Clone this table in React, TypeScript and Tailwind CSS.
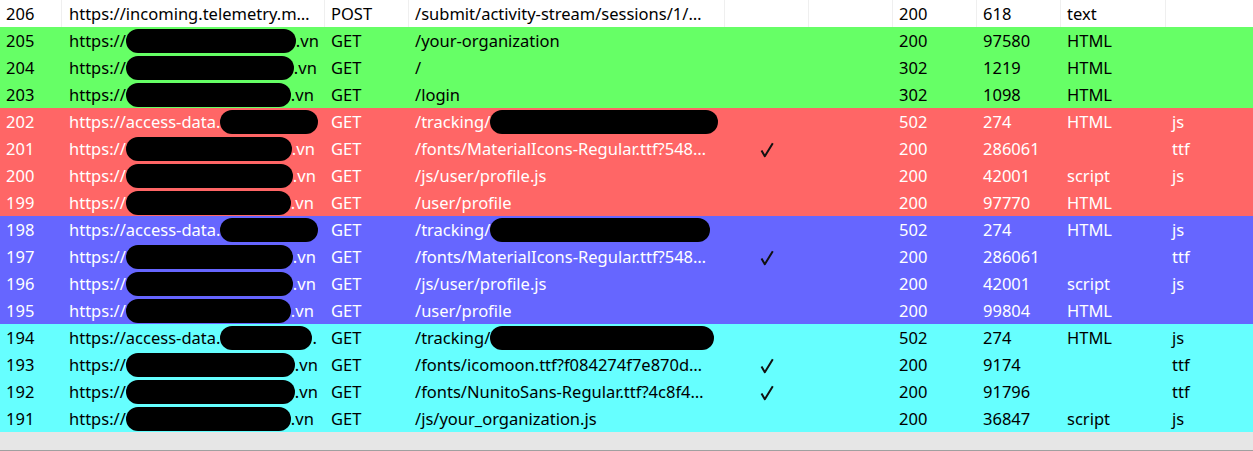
import React from "react"

type Row = {
  id: number
  tone: "white" | "green" | "red" | "blue" | "cyan"
  host: "telemetry" | "vn" | "access" | "access-dot"
  blob?: number
  method: string
  path: string
  trackBlob?: number
  cached?: boolean
  status: string
  size: string
  type: string
  ext: string
}

const rows: Row[] = [
  { id: 206, tone: "white", host: "telemetry", method: "POST", path: "/submit/activity-stream/sessions/1/…", status: "200", size: "618", type: "text", ext: "" },
  { id: 205, tone: "green", host: "vn", blob: 170, method: "GET", path: "/your-organization", status: "200", size: "97580", type: "HTML", ext: "" },
  { id: 204, tone: "green", host: "vn", blob: 168, method: "GET", path: "/", status: "302", size: "1219", type: "HTML", ext: "" },
  { id: 203, tone: "green", host: "vn", blob: 165, method: "GET", path: "/login", status: "302", size: "1098", type: "HTML", ext: "" },
  { id: 202, tone: "red", host: "access", blob: 98, method: "GET", path: "/tracking/", trackBlob: 228, status: "502", size: "274", type: "HTML", ext: "js" },
  { id: 201, tone: "red", host: "vn", blob: 166, method: "GET", path: "/fonts/MaterialIcons-Regular.ttf?548…", cached: true, status: "200", size: "286061", type: "", ext: "ttf" },
  { id: 200, tone: "red", host: "vn", blob: 167, method: "GET", path: "/js/user/profile.js", status: "200", size: "42001", type: "script", ext: "js" },
  { id: 199, tone: "red", host: "vn", blob: 165, method: "GET", path: "/user/profile", status: "200", size: "97770", type: "HTML", ext: "" },
  { id: 198, tone: "blue", host: "access", blob: 98, method: "GET", path: "/tracking/", trackBlob: 220, status: "502", size: "274", type: "HTML", ext: "js" },
  { id: 197, tone: "blue", host: "vn", blob: 167, method: "GET", path: "/fonts/MaterialIcons-Regular.ttf?548…", cached: true, status: "200", size: "286061", type: "", ext: "ttf" },
  { id: 196, tone: "blue", host: "vn", blob: 167, method: "GET", path: "/js/user/profile.js", status: "200", size: "42001", type: "script", ext: "js" },
  { id: 195, tone: "blue", host: "vn", blob: 165, method: "GET", path: "/user/profile", status: "200", size: "99804", type: "HTML", ext: "" },
  { id: 194, tone: "cyan", host: "access-dot", blob: 92, method: "GET", path: "/tracking/", trackBlob: 224, status: "502", size: "274", type: "HTML", ext: "js" },
  { id: 193, tone: "cyan", host: "vn", blob: 169, method: "GET", path: "/fonts/icomoon.ttf?f084274f7e870d…", cached: true, status: "200", size: "9174", type: "", ext: "ttf" },
  { id: 192, tone: "cyan", host: "vn", blob: 169, method: "GET", path: "/fonts/NunitoSans-Regular.ttf?4c8f4…", cached: true, status: "200", size: "91796", type: "", ext: "ttf" },
  { id: 191, tone: "cyan", host: "vn", blob: 165, method: "GET", path: "/js/your_organization.js", status: "200", size: "36847", type: "script", ext: "js" },
]

const toneClass: Record<Row["tone"], string> = {
  white: "bg-white text-black",
  green: "bg-[#66ff66] text-black",
  red: "bg-[#ff6666] text-white",
  blue: "bg-[#6666ff] text-white",
  cyan: "bg-[#66ffff] text-black",
}

// redaction scribble over the hostnames / tracking ids
const Blob = ({ w }: { w: number }) => (
  <span
    className="inline-block h-[24px] shrink-0 rounded-full bg-black align-middle"
    style={{ width: w }}
  />
)

const Check = () => (
  <svg width="14" height="16" viewBox="0 0 14 16" className="ml-[-6px] mt-[1px]">
    <path d="M1.5 8.5 L4.8 14.2 L12.8 1.2" fill="none" stroke="#111" strokeWidth="2" strokeLinejoin="round" />
  </svg>
)

const Cell = ({ white, children, className = "" }: { white: boolean; children?: React.ReactNode; className?: string }) => (
  <div
    className={`flex h-[27px] items-center overflow-hidden whitespace-nowrap pl-[6px] pt-[1px] ${
      white ? "border-r border-[#efefef]" : ""
    } ${className}`}
  >
    {children}
  </div>
)

function HostCell({ row }: { row: Row }) {
  if (row.host === "telemetry") return <>https://incoming.telemetry.m…</>
  if (row.host === "vn")
    return (
      <>
        <span>https://</span>
        <Blob w={row.blob!} />
        <span>.vn</span>
      </>
    )
  return (
    <>
      <span>https://access-data.</span>
      <Blob w={row.blob!} />
      {row.host === "access-dot" && <span>.</span>}
    </>
  )
}

export default function App() {
  return (
    <div className="h-[451px] w-[1253px] overflow-hidden bg-white text-[16.5px] font-['Noto_Sans',sans-serif]">
      {rows.map((row) => {
        const white = row.tone === "white"
        return (
          <div
            key={row.id}
            className={`grid h-[27px] grid-cols-[62px_263px_84px_316px_84px_84px_84px_84px_105px_87px] ${toneClass[row.tone]}`}
          >
            <Cell white={white} className="pl-[5px]">{row.id}</Cell>
            <Cell white={white} className="pl-[7px]">
              <HostCell row={row} />
            </Cell>
            <Cell white={white}>{row.method}</Cell>
            <Cell white={white}>
              <span>{row.path}</span>
              {row.trackBlob && <Blob w={row.trackBlob} />}
            </Cell>
            <Cell white={white} className="justify-center pl-0">
              {row.cached && <Check />}
            </Cell>
            <Cell white={white} />
            <Cell white={white}>{row.status}</Cell>
            <Cell white={white}>{row.size}</Cell>
            <Cell white={white} className="pl-[5px]">{row.type}</Cell>
            <Cell white={white} className="border-r-0 pl-[5px]">{row.ext}</Cell>
          </div>
        )
      })}
      <div className="h-[19px] border-b border-[#a0a0a0] bg-[#e6e6e6]" />
    </div>
  )
}
